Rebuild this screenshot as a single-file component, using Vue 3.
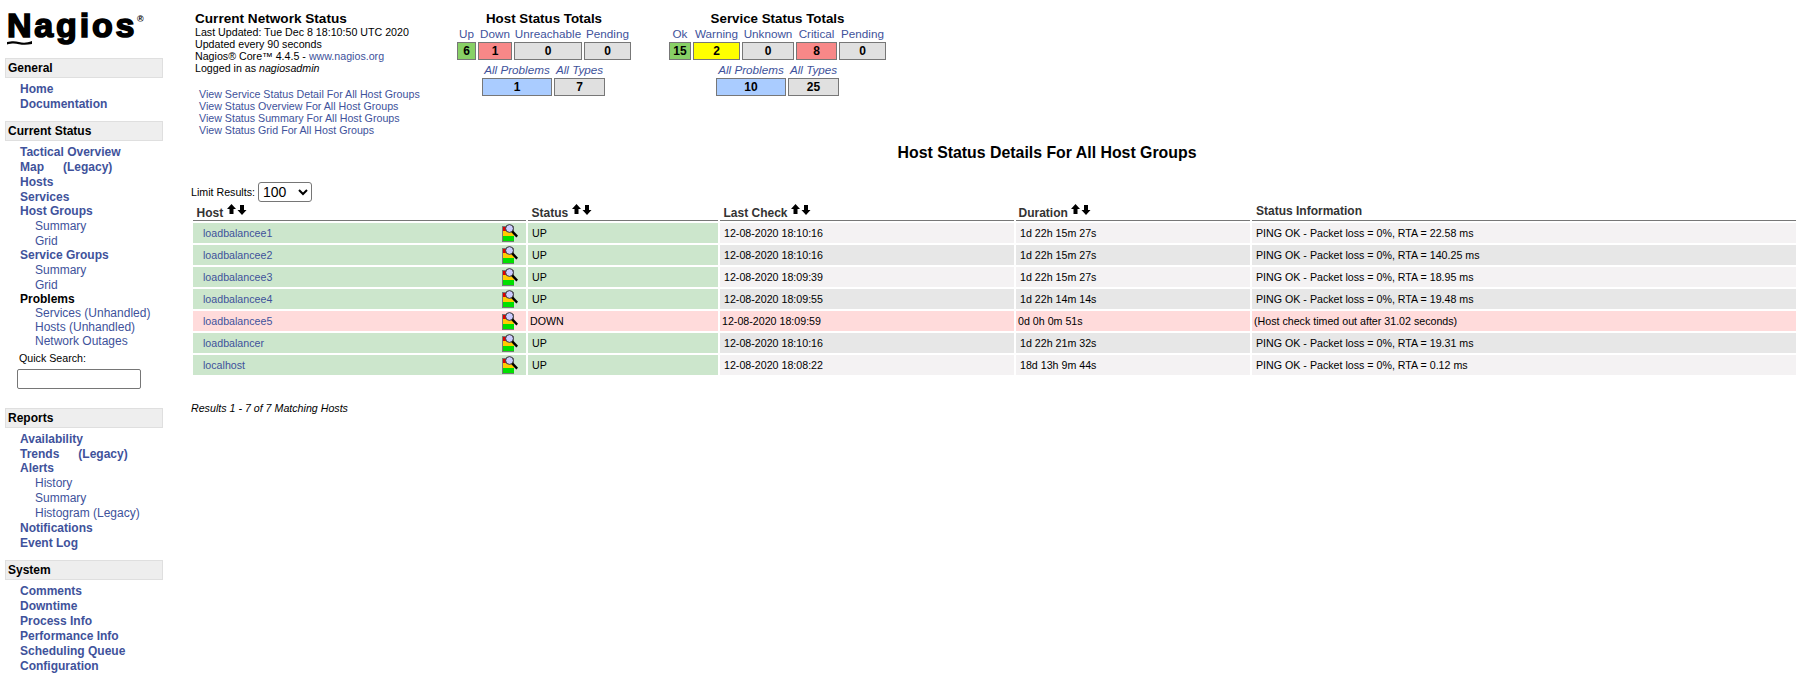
<script setup>
const nav = [
  {
    title: 'General',
    items: [
      { t: 'Home' },
      { t: 'Documentation' },
    ],
  },
  {
    title: 'Current Status',
    search: true,
    items: [
      { t: 'Tactical Overview' },
      { t: 'Map', legacy: true },
      { t: 'Hosts' },
      { t: 'Services' },
      { t: 'Host Groups', tight: true },
      { t: 'Summary', sub: true },
      { t: 'Grid', sub: true },
      { t: 'Service Groups', tight: true },
      { t: 'Summary', sub: true },
      { t: 'Grid', sub: true },
      { t: 'Problems', tight: true, plain: true },
      { t: 'Services (Unhandled)', sub: true, tight: true },
      { t: 'Hosts (Unhandled)', sub: true, tight: true },
      { t: 'Network Outages', sub: true, tight: true },
    ],
  },
  {
    title: 'Reports',
    items: [
      { t: 'Availability' },
      { t: 'Trends', legacy: true },
      { t: 'Alerts', tight: true },
      { t: 'History', sub: true },
      { t: 'Summary', sub: true },
      { t: 'Histogram (Legacy)', sub: true },
      { t: 'Notifications' },
      { t: 'Event Log' },
    ],
  },
  {
    title: 'System',
    items: [
      { t: 'Comments' },
      { t: 'Downtime' },
      { t: 'Process Info' },
      { t: 'Performance Info' },
      { t: 'Scheduling Queue' },
      { t: 'Configuration' },
    ],
  },
]

const viewLinks = [
  'View Service Status Detail For All Host Groups',
  'View Status Overview For All Host Groups',
  'View Status Summary For All Host Groups',
  'View Status Grid For All Host Groups',
]

const hostTotals = [
  { label: 'Up', n: 6, w: 19, c: 'green' },
  { label: 'Down', n: 1, w: 34, c: 'red' },
  { label: 'Unreachable', n: 0, w: 68, c: 'grey' },
  { label: 'Pending', n: 0, w: 47, c: 'grey' },
]
const hostAll = [
  { label: 'All Problems', n: 1, w: 70, c: 'blue' },
  { label: 'All Types', n: 7, w: 51, c: 'grey' },
]
const serviceTotals = [
  { label: 'Ok', n: 15, w: 22, c: 'green' },
  { label: 'Warning', n: 2, w: 47, c: 'yellow' },
  { label: 'Unknown', n: 0, w: 52, c: 'grey' },
  { label: 'Critical', n: 8, w: 41, c: 'red' },
  { label: 'Pending', n: 0, w: 47, c: 'grey' },
]
const serviceAll = [
  { label: 'All Problems', n: 10, w: 70, c: 'blue' },
  { label: 'All Types', n: 25, w: 51, c: 'grey' },
]

const hosts = [
  { name: 'loadbalancee1', status: 'UP', check: '12-08-2020 18:10:16', dur: '1d 22h 15m 27s', info: 'PING OK - Packet loss = 0%, RTA = 22.58 ms' },
  { name: 'loadbalancee2', status: 'UP', check: '12-08-2020 18:10:16', dur: '1d 22h 15m 27s', info: 'PING OK - Packet loss = 0%, RTA = 140.25 ms' },
  { name: 'loadbalancee3', status: 'UP', check: '12-08-2020 18:09:39', dur: '1d 22h 15m 27s', info: 'PING OK - Packet loss = 0%, RTA = 18.95 ms' },
  { name: 'loadbalancee4', status: 'UP', check: '12-08-2020 18:09:55', dur: '1d 22h 14m 14s', info: 'PING OK - Packet loss = 0%, RTA = 19.48 ms' },
  { name: 'loadbalancee5', status: 'DOWN', check: '12-08-2020 18:09:59', dur: '0d 0h 0m 51s', info: '(Host check timed out after 31.02 seconds)' },
  { name: 'loadbalancer', status: 'UP', check: '12-08-2020 18:10:16', dur: '1d 22h 21m 32s', info: 'PING OK - Packet loss = 0%, RTA = 19.31 ms' },
  { name: 'localhost', status: 'UP', check: '12-08-2020 18:08:22', dur: '18d 13h 9m 44s', info: 'PING OK - Packet loss = 0%, RTA = 0.12 ms' },
]

const columns = ['Host', 'Status', 'Last Check', 'Duration']
</script>

<template>
  <div class="page">
    <aside class="side">
      <div class="logo">
        <span class="logo-text">Nagios</span><span class="logo-reg">®</span>
        <svg class="logo-swash" width="25" height="4" viewBox="0 0 25 4">
          <path d="M0 1 C5 0 8 0 12 1 C16 2 20 2 25 0 L25 3 C20 4 16 4 12 3.2 C8 2.4 5 2.4 0 3.4 Z" fill="#000" />
        </svg>
      </div>
      <section v-for="s in nav" :key="s.title" class="nav-sec">
        <div class="nav-title">{{ s.title }}</div>
        <ul class="nav-list">
          <li v-for="(it, i) in s.items" :key="i" :class="{ sub: it.sub, tight: it.tight, plain: it.plain }">
            {{ it.t }}<span v-if="it.legacy" class="legacy">(Legacy)</span>
          </li>
        </ul>
        <div v-if="s.search" class="search">
          <label>Quick Search:</label>
          <input type="text" />
        </div>
      </section>
    </aside>

    <main class="content">
      <div class="top">
        <div class="info">
          <div class="info-title">Current Network Status</div>
          <div class="info-line">Last Updated: Tue Dec 8 18:10:50 UTC 2020</div>
          <div class="info-line">Updated every 90 seconds</div>
          <div class="info-line">Nagios® Core™ 4.4.5 - <a>www.nagios.org</a></div>
          <div class="info-line">Logged in as <i>nagiosadmin</i></div>
          <div class="view-links">
            <a v-for="l in viewLinks" :key="l">{{ l }}</a>
          </div>
        </div>

        <div class="totals host-totals">
          <div class="tot-title">Host Status Totals</div>
          <div class="tot-row">
            <div v-for="c in hostTotals" :key="c.label" class="tot-col" :style="{ width: c.w + 'px' }">
              <span class="tot-label">{{ c.label }}</span>
              <span class="tot-num" :class="c.c">{{ c.n }}</span>
            </div>
          </div>
          <div class="tot-row second">
            <div v-for="c in hostAll" :key="c.label" class="tot-col" :style="{ width: c.w + 'px' }">
              <span class="tot-label em">{{ c.label }}</span>
              <span class="tot-num" :class="c.c">{{ c.n }}</span>
            </div>
          </div>
        </div>

        <div class="totals service-totals">
          <div class="tot-title">Service Status Totals</div>
          <div class="tot-row">
            <div v-for="c in serviceTotals" :key="c.label" class="tot-col" :style="{ width: c.w + 'px' }">
              <span class="tot-label">{{ c.label }}</span>
              <span class="tot-num" :class="c.c">{{ c.n }}</span>
            </div>
          </div>
          <div class="tot-row second">
            <div v-for="c in serviceAll" :key="c.label" class="tot-col" :style="{ width: c.w + 'px' }">
              <span class="tot-label em">{{ c.label }}</span>
              <span class="tot-num" :class="c.c">{{ c.n }}</span>
            </div>
          </div>
        </div>
      </div>

      <h1 class="details-title">Host Status Details For All Host Groups</h1>

      <div class="limit">
        <label>Limit Results:</label>
        <select>
          <option>100</option>
        </select>
      </div>

      <table class="hosts">
        <colgroup>
          <col style="width: 333px" />
          <col style="width: 190px" />
          <col style="width: 294px" />
          <col style="width: 234px" />
          <col style="width: 660px" />
        </colgroup>
        <thead>
          <tr>
            <th v-for="c in columns" :key="c">
              {{ c }}
              <svg class="sort" width="20" height="11" viewBox="0 0 20 11">
                <path d="M4.5 0 L9 5 L6.5 5 L6.5 10 L2.5 10 L2.5 5 L0 5 Z" fill="#000" />
                <path d="M15 11 L10.5 6 L13 6 L13 1 L17 1 L17 6 L19.5 6 Z" fill="#000" />
              </svg>
            </th>
            <th class="th-info">Status Information</th>
          </tr>
        </thead>
        <tbody>
          <tr v-for="(h, i) in hosts" :key="h.name" :class="[i % 2 ? 'dark' : 'light', { down: h.status === 'DOWN' }]">
            <td class="host-cell">
              <div class="host-inner">
                <a>{{ h.name }}</a>
                <svg class="host-icon" width="16" height="18" viewBox="0 0 16 18">
                  <rect x="0" y="2" width="12" height="16" fill="#777" />
                  <rect x="1" y="3" width="4" height="4" fill="#e00000" />
                  <rect x="1" y="7" width="11" height="5" fill="#ffcc00" />
                  <rect x="1" y="12" width="11" height="5" fill="#00e000" />
                  <circle cx="7.5" cy="4.5" r="3.9" fill="#ccccff" stroke="#333" stroke-width="1" />
                  <path d="M10.2 7.4 L15.2 12.6" stroke="#000" stroke-width="2.4" />
                </svg>
              </div>
            </td>
            <td class="status-cell">{{ h.status }}</td>
            <td>{{ h.check }}</td>
            <td>{{ h.dur }}</td>
            <td>{{ h.info }}</td>
          </tr>
        </tbody>
      </table>

      <div class="results">Results 1 - 7 of 7 Matching Hosts</div>
    </main>
  </div>
</template>

<style scoped>
.page {
  display: flex;
  width: 100vw;
  height: 100vh;
  overflow: hidden;
  background: #fff;
  color: #000;
  font-family: "Liberation Sans", Arial, sans-serif;
}

a {
  color: #40529b;
}

/* left menu */
.side {
  flex: 0 0 168px;
  padding-left: 5px;
  box-sizing: border-box;
}
.logo {
  position: relative;
  height: 58px;
}
.logo-text {
  position: absolute;
  left: 2px;
  top: 5px;
  font-size: 34px;
  line-height: 40px;
  font-weight: 700;
  letter-spacing: 2.8px;
  -webkit-text-stroke: 1.6px #000;
}
.logo-reg {
  position: absolute;
  left: 132px;
  top: 13px;
  font-size: 9px;
  font-weight: 700;
  line-height: 12px;
}
.logo-swash {
  position: absolute;
  left: 2px;
  top: 41px;
}
.nav-sec {
  margin-bottom: 10px;
}
.nav-title {
  box-sizing: border-box;
  width: 158px;
  height: 20px;
  padding-left: 2px;
  background: #eeeeee;
  border: 1px solid #dfdfdf;
  font-size: 12px;
  font-weight: 700;
  line-height: 18px;
}
.nav-list {
  list-style: none;
  margin: 3px 0 0;
  padding: 0;
}
.nav-list li {
  height: 15px;
  padding-left: 15px;
  font-size: 12px;
  font-weight: 700;
  line-height: 16px;
  color: #40529b;
  white-space: nowrap;
}
.nav-list li.tight {
  height: 14px;
  line-height: 14px;
}
.nav-list li.sub {
  padding-left: 30px;
  font-weight: 400;
}
.nav-list li.plain {
  color: #000;
}
.legacy {
  margin-left: 19px;
}
.search {
  margin: 3px 0 19px;
  padding-left: 12px;
}
.search label {
  display: block;
  padding-left: 2px;
  font-size: 10.67px;
  line-height: 14px;
}
.search input {
  display: block;
  box-sizing: border-box;
  width: 124px;
  height: 20px;
  margin-top: 4px;
  padding: 0 2px;
  border: 1px solid #767676;
  border-radius: 2px;
  background: #fff;
}

/* right side */
.content {
  flex: 0 0 1735px;
  min-width: 0;
  box-sizing: border-box;
  padding-left: 23px;
}
.top {
  display: flex;
  height: 136px;
  padding: 10px 0 0 4px;
  box-sizing: border-box;
}
.info {
  flex: 0 0 262px;
}
.info-title {
  height: 16px;
  font-size: 13.6px;
  font-weight: 700;
  line-height: 18px;
}
.info-line {
  font-size: 10.67px;
  line-height: 12px;
}
.view-links {
  display: flex;
  flex-direction: column;
  margin: 14px 0 0 4px;
  font-size: 10.67px;
  line-height: 12px;
}
.totals {
  display: flex;
  flex-direction: column;
  align-items: center;
}
.host-totals {
  width: 174px;
}
.host-totals .second {
  margin-right: 1px;
}
.service-totals {
  width: 217px;
  margin-left: 38px;
}
.tot-title {
  height: 16px;
  font-size: 13.33px;
  font-weight: 700;
  line-height: 18px;
  white-space: nowrap;
}
.tot-row {
  display: flex;
  gap: 2px;
  margin-top: 1px;
}
.tot-row.second {
  margin-top: 2px;
}
.tot-col {
  display: flex;
  flex-direction: column;
  align-items: center;
}
.tot-label {
  height: 15px;
  font-size: 11.7px;
  line-height: 14px;
  color: #40529b;
  white-space: nowrap;
}
.tot-label.em {
  height: 16px;
  line-height: 15px;
  font-style: italic;
}
.tot-num {
  box-sizing: border-box;
  width: 100%;
  height: 18px;
  border: 1px solid #777;
  font-size: 12px;
  font-weight: 700;
  line-height: 16px;
  text-align: center;
}
.green { background: #88d066; }
.red { background: #f88888; }
.grey { background: #e0e0e0; }
.yellow { background: #ffff00; }
.blue { background: #aaccff; }

.details-title {
  margin: 9px 0 0;
  font-size: 15.87px;
  font-weight: 700;
  line-height: 16px;
  text-align: center;
}
.limit {
  display: flex;
  align-items: center;
  gap: 4px;
  height: 20px;
  margin-top: 21px;
  font-size: 10.67px;
}
.limit label {
  width: 63px;
  white-space: nowrap;
}
.limit select {
  box-sizing: border-box;
  width: 54px;
  height: 20px;
  padding: 0;
  font-family: "Liberation Sans", Arial, sans-serif;
  font-size: 14px;
  background: #fff;
  color: #000;
  border: 1px solid #767676;
  border-radius: 3px;
}

.hosts {
  table-layout: fixed;
  width: 1721px;
  border-collapse: separate;
  border-spacing: 2px;
  font-size: 10.67px;
}
.hosts th {
  box-sizing: border-box;
  height: 17px;
  padding: 0 0 0 3.5px;
  border-bottom: 1px solid #777;
  font-size: 12px;
  font-weight: 700;
  line-height: 14px;
  text-align: left;
  color: #333;
  white-space: nowrap;
}
.hosts th:nth-child(4) {
  padding-left: 2.5px;
}
.hosts th.th-info {
  padding-left: 4px;
  vertical-align: top;
}
.sort {
  vertical-align: 2px;
}
.hosts td {
  height: 20px;
  padding: 0 0 0 4px;
  white-space: nowrap;
  line-height: 20px;
}
.light td {
  background: #f4f2f3;
}
.dark td {
  background: #e7e7e7;
}
.hosts td.host-cell,
.hosts td.status-cell {
  background: #cce6cc;
}
.hosts tr.down td {
  padding-left: 2px;
  background: #ffdbdb;
}
.hosts td.host-cell,
.hosts tr.down td.host-cell {
  padding: 0 8px 0 10px;
}
.host-inner {
  display: flex;
  align-items: center;
  justify-content: space-between;
  height: 20px;
}
.results {
  margin-top: 24px;
  font-size: 10.67px;
  font-style: italic;
  line-height: 14px;
}
</style>

<style>
html, body {
  margin: 0;
  overflow: hidden;
}
</style>
